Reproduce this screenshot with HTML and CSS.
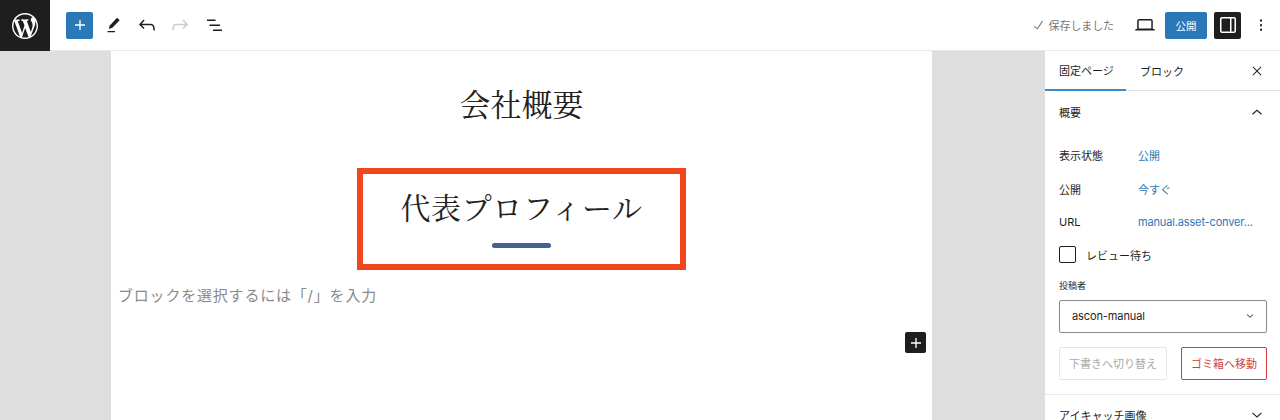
FILE: index.html
```html
<!DOCTYPE html>
<html lang="ja">
<head>
<meta charset="utf-8">
<title>会社概要</title>
<link rel="stylesheet" href="styles.css">
</head>
<body>
<header class="topbar">
  <div class="logo">
    <svg width="26" height="26" viewBox="0 0 20 20"><path fill="#fff" d="M20 10c0-5.51-4.49-10-10-10C4.48 0 0 4.49 0 10c0 5.52 4.48 10 10 10 5.51 0 10-4.48 10-10zM7.78 15.37L4.37 6.22c.55-.02 1.17-.08 1.17-.08.5-.06.44-1.13-.06-1.11 0 0-1.45.11-2.37.11-.18 0-.37 0-.58-.01C4.12 2.69 6.87 1.11 10 1.11c2.33 0 4.45.87 6.05 2.34-.68-.11-1.65.39-1.65 1.58 0 .74.45 1.36.9 2.1.35.61.55 1.36.55 2.46 0 1.49-1.4 5-1.4 5l-3.03-8.37c.54-.02.82-.17.82-.17.5-.05.44-1.25-.06-1.22 0 0-1.44.12-2.38.12-.87 0-2.33-.12-2.33-.12-.5-.03-.56 1.2-.06 1.22l.92.08 1.26 3.41zM17.41 10c.24-.64.74-1.87.43-4.25.7 1.29 1.05 2.71 1.05 4.25 0 3.29-1.73 6.24-4.4 7.78.97-2.59 1.94-5.2 2.92-7.78zM6.1 18.09C3.12 16.65 1.11 13.53 1.11 10c0-1.3.23-2.48.72-3.59C3.25 10.3 4.67 14.2 6.1 18.09zm4.03-6.63l2.58 6.98c-.86.29-1.76.45-2.71.45-.79 0-1.57-.11-2.29-.33.81-2.38 1.62-4.74 2.42-7.1z"/></svg>
  </div>
  <div class="tools">
    <span class="add-btn"><svg width="20" height="20" viewBox="0 0 24 24"><path fill="#fff" d="M18 11.200h-5.200V6h-1.600v5.200H6v1.600h5.200V18h1.600v-5.200H18z"/></svg></span>
    <svg class="tool pen" width="24" height="24" viewBox="0 0 24 24"><path fill="#1e1e1e" d="M18.700 7.300L16 4.700 8.800 12.400l-1.100 3.500 3.600-1.100L18.700 7.300zM6.500 19.300h7.500v-1.400H6.500v1.400z"/></svg>
    <svg class="tool undo" width="24" height="24" viewBox="0 0 24 24"><path fill="#1e1e1e" d="M18.300 11.700c-.6-.6-1.400-.9-2.300-.9H6.700l2.900-3.300-1.100-1-4.500 5L8.500 16l1-1-2.700-2.700H16c.5 0 .9.2 1.300.5 1 1 1 3.400 1 4.500v.3h1.500v-.2c0-1.500 0-4.300-1.500-5.700z"/></svg>
    <svg class="tool" width="24" height="24" viewBox="0 0 24 24"><path fill="#ccc" d="M15.600 6.500l-1.100 1 2.900 3.300H8c-.9 0-1.700.3-2.300.9-1.400 1.500-1.400 4.200-1.400 5.600v.2h1.500v-.3c0-1.100 0-3.500 1-4.500.3-.3.7-.5 1.300-.5h9.200L14.500 15l1.100 1.100 4.600-4.600-4.600-5z"/></svg>
    <svg class="tool list" width="24" height="24" viewBox="0 0 24 24"><path fill="#1e1e1e" d="M4 6.500h8.500V8H4V6.500zm2.500 5H17V13H6.500v-1.500zM10 16.500h9V18h-9v-1.500z"/></svg>
  </div>
  <div class="actions">
    <span class="saved"><svg width="16" height="16" viewBox="0 0 24 24"><path fill="#757575" d="M16.700 5.300l1.200.9-7.900 12.600-5.600-4.100.9-1.200 4.300 3.100z"/></svg>保存しました</span>
    <svg class="device" width="24" height="24" viewBox="0 0 24 24"><path fill="#1e1e1e" d="M20.500 16h-.7V8c0-1.100-.9-2-2-2H6.200c-1.100 0-2 .9-2 2v8h-.7c-.8 0-1.500.7-1.500 1.500h20c0-.8-.7-1.500-1.500-1.500zM5.700 8c0-.3.200-.5.500-.5h11.600c.3 0 .5.200.5.500v7.600H5.700V8z"/></svg>
    <span class="publish">公開</span>
    <span class="panel-btn"><svg width="24" height="24" viewBox="0 0 24 24"><path fill="#fff" d="M18 4H6c-1.100 0-2 .9-2 2v12c0 1.100.9 2 2 2h12c1.100 0 2-.9 2-2V6c0-1.100-.9-2-2-2zM5.500 18V6c0-.3.200-.5.500-.5h8v13H6c-.3 0-.5-.2-.5-.5zm13 0c0 .3-.2.5-.5.500h-2.500v-13H18c.3 0 .5.200.5.500v12z"/></svg></span>
    <svg class="more" width="24" height="24" viewBox="0 0 24 24"><path fill="#1e1e1e" d="M11 6.500h2v2h-2zM11 11.200h2v2h-2zM11 15.800h2v2h-2z"/></svg>
  </div>
</header>
<div class="main">
  <div class="gutter-left"></div>
  <main class="canvas">
    <h1 class="page-title">会社概要</h1>
    <div class="highlight">
      <h2 class="heading">代表プロフィール</h2>
      <div class="rule"></div>
    </div>
    <p class="placeholder">ブロックを選択するには「/」を入力</p>
    <div class="inserter-row"><span class="inserter"><svg width="20" height="20" viewBox="0 0 24 24"><path fill="#fff" d="M18 11.200h-5.200V6h-1.600v5.200H6v1.600h5.200V18h1.600v-5.200H18z"/></svg></span></div>
  </main>
  <div class="gutter-right"></div>
  <aside class="sidebar">
    <div class="tabs">
      <span class="tab active">固定ページ</span>
      <span class="tab">ブロック</span>
      <svg class="close" width="14" height="14" viewBox="0 0 24 24"><path fill="#1e1e1e" d="M13.100 12l6.500-6.600-1.100-1.100-6.500 6.600-6.500-6.600-1.100 1.100 6.500 6.600-6.500 6.600 1.100 1.100 6.500-6.600 6.500 6.600 1.100-1.100z"/></svg>
    </div>
    <section class="panel">
      <div class="panel-head"><span>概要</span><svg width="18" height="18" viewBox="0 0 24 24"><path fill="#1e1e1e" d="M6.500 15.500l5.500-5 5.500 5 1-1.100L12 8.500l-6.500 5.900z"/></svg></div>
      <div class="row"><span class="label">表示状態</span><span class="link">公開</span></div>
      <div class="row"><span class="label">公開</span><span class="link">今すぐ</span></div>
      <div class="row"><span class="label">URL</span><span class="link url">manual.asset-conver...</span></div>
      <div class="check-row"><span class="checkbox"></span><span class="check-label">レビュー待ち</span></div>
      <div class="author-label">投稿者</div>
      <div class="select"><span>ascon-manual</span><svg width="12" height="12" viewBox="0 0 24 24"><path fill="#1e1e1e" d="M17.500 8.500L12 13.500l-5.500-5-1 1.100 6.500 5.900 6.500-5.900z"/></svg></div>
      <div class="btn-row"><span class="btn draft">下書きへ切り替え</span><span class="btn trash">ゴミ箱へ移動</span></div>
    </section>
    <div class="panel-head next"><span>アイキャッチ画像</span><svg width="18" height="18" viewBox="0 0 24 24"><path fill="#1e1e1e" d="M17.500 8.500L12 13.500l-5.500-5-1 1.100 6.500 5.900 6.500-5.900z"/></svg></div>
  </aside>
</div>
</body>
</html>
```
FILE: styles.css
```css
* { box-sizing: border-box; }
html, body { margin: 0; height: 420px; overflow: hidden; }
body { background: #fff; color: #1e1e1e; font-family: "Inter", "Noto Sans CJK JP", sans-serif; font-size: 11px; }
.topbar { display: flex; align-items: center; height: 51px; border-bottom: 1px solid #e8e8e8; }
.logo { width: 50px; height: 51px; margin-bottom: -1px; background: #1e1e1e; display: flex; align-items: center; justify-content: center; }
.tools { display: flex; align-items: center; margin-left: 16px; }
.add-btn { width: 27px; height: 27px; background: #2b78b8; border-radius: 2px; display: flex; align-items: center; justify-content: center; }
.tool { margin-left: 9px; width: 24px; }
.tool.pen { margin-left: 8px; }
.tool.undo { margin-left: 10px; }
.tool.list { margin-left: 11px; }
.actions { display: flex; align-items: center; margin-left: auto; }
.saved { display: flex; align-items: center; gap: 2px; margin-left: -2px; color: #757575; font-size: 11px; letter-spacing: -0.100px; }
.device { margin-left: 19px; }
.publish { margin-left: 8px; width: 42px; height: 27px; background: #2b78b8; color: #fff; border-radius: 2px; display: flex; align-items: center; justify-content: center; font-size: 10.500px; }
.panel-btn { margin-left: 7px; width: 27px; height: 27px; background: #1e1e1e; border-radius: 2px; display: flex; align-items: center; justify-content: center; }
.more { margin-left: 8px; margin-right: 7px; }
.main { display: flex; height: 369px; }
.gutter-left { width: 111px; background: #dedede; }
.gutter-right { width: 113px; background: #dedede; }
.canvas { width: 821px; background: #fff; display: flex; flex-direction: column; align-items: center; }
.page-title { margin: 32px 0 0; height: 40px; font-family: "Noto Serif CJK JP", "Noto Sans CJK JP", serif; font-weight: 400; font-size: 31px; line-height: 40px; color: #222; }
.highlight { margin-top: 45px; width: 329px; height: 102px; border: 6px solid #f0471e; display: flex; flex-direction: column; align-items: center; }
.heading { margin: 12px 0 0; font-family: "Noto Serif CJK JP", "Noto Sans CJK JP", serif; font-weight: 400; font-size: 30px; line-height: 40px; letter-spacing: 0.650px; color: #222; }
.rule { margin-top: 17px; width: 59px; height: 5px; border-radius: 3px; background: #44608f; }
.placeholder { align-self: flex-start; margin: 15px 0 0 7px; font-size: 15px; line-height: 22px; color: #8a8a8a; letter-spacing: 0.800px; }
.inserter-row { align-self: stretch; display: flex; justify-content: flex-end; padding-right: 6px; margin-top: 25px; }
.inserter { width: 21px; height: 21px; background: #1e1e1e; border-radius: 2px; display: flex; align-items: center; justify-content: center; }
.sidebar { width: 235px; background: #fff; }
.tabs { display: flex; align-items: center; height: 40px; border-bottom: 1px solid #e0e0e0; }
.tab { height: 40px; display: flex; align-items: center; padding: 0 14px; font-size: 11px; white-space: nowrap; color: #1e1e1e; }
.tab.active { width: 81px; border-bottom: 2px solid #3a8bcf; }
.close { margin-left: auto; margin-right: 16px; }
.panel { border-bottom: 1px solid #e8e8e8; height: 304px; }
.panel-head { display: flex; align-items: center; justify-content: space-between; height: 42px; padding: 0 14px; font-size: 11px; }
.panel-head.next { height: 40px; }
.row { display: flex; align-items: center; height: 20px; margin: 0 14px 13.500px; }
.panel-head + .row { margin-top: 12px; }
.label { width: 79px; font-size: 11px; color: #1e1e1e; }
.link { color: #2b78b8; font-size: 11px; white-space: nowrap; }
.url { letter-spacing: -0.150px; }
.check-row { display: flex; align-items: center; margin: 1px 14px 0; height: 18px; gap: 10px; }
.checkbox { width: 17px; height: 17px; border: 1px solid #1e1e1e; border-radius: 2px; }
.check-label { font-size: 11px; }
.author-label { margin: 15px 14px 0; font-size: 9px; line-height: 14px; color: #1e1e1e; }
.select { margin: 7px 13px 0 14px; height: 33px; border: 1px solid #8a8a8a; border-radius: 2px; display: flex; align-items: center; justify-content: space-between; padding: 0 10px 0 12px; font-size: 11px; letter-spacing: -0.100px; }
.btn-row { display: flex; justify-content: space-between; margin: 14px 13px 0 14px; }
.btn { height: 33px; border-radius: 2px; display: flex; align-items: center; justify-content: center; font-size: 11px; }
.draft { width: 108px; border: 1px solid #e6e6e6; color: #aaa; }
.trash { width: 86px; border: 1px solid #cc1818; color: #cc1818; opacity: .85; }
```
